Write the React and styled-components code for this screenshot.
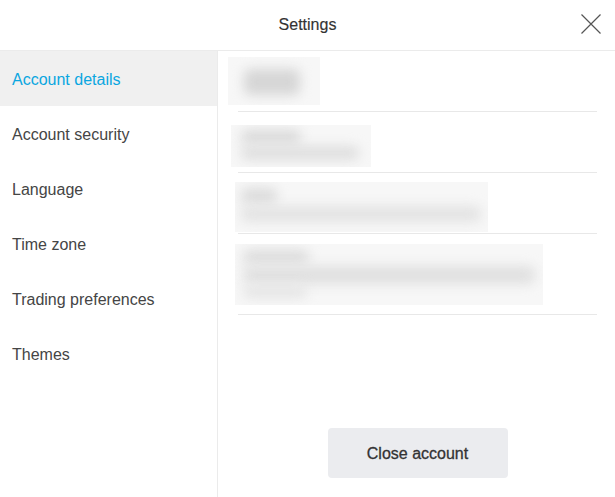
import React from "react";
import styled, { createGlobalStyle } from "styled-components";

const Global = createGlobalStyle`
  *, *::before, *::after { box-sizing: border-box; }
  html, body { margin: 0; padding: 0; background: #fff; }
  body { font-family: "Liberation Sans", Arial, sans-serif; }
  #root { width: 615px; height: 497px; }
`;

const Dialog = styled.div`
  width: 615px;
  height: 497px;
  display: flex;
  flex-direction: column;
  background: #fff;
  overflow: hidden;
`;

const Header = styled.header`
  position: relative;
  height: 51px;
  flex: none;
  display: flex;
  align-items: center;
  justify-content: center;
  border-bottom: 1px solid #ebebeb;
`;

const Title = styled.h1`
  margin: 0;
  font-size: 16px;
  font-weight: 500;
  color: #333;
  -webkit-text-stroke: 0.15px #333;
`;

const CloseButton = styled.button`
  position: absolute;
  right: 13px;
  top: 13px;
  width: 22px;
  height: 22px;
  padding: 0;
  border: 0;
  background: none;
  display: flex;
  align-items: center;
  justify-content: center;
  cursor: pointer;
`;

const Body = styled.div`
  flex: 1;
  display: flex;
  min-height: 0;
`;

const Sidebar = styled.nav`
  width: 218px;
  flex: none;
  border-right: 1px solid #ebebeb;
  display: flex;
  flex-direction: column;
`;

const NavItem = styled.div`
  height: 55px;
  display: flex;
  align-items: center;
  padding: 2px 0 0 12px;
  font-size: 16px;
  color: ${(p) => (p.$active ? "#0aa6e0" : "#454545")};
  background: ${(p) => (p.$active ? "#f0f0f0" : "transparent")};
`;

const Content = styled.section`
  flex: 1;
  display: flex;
  flex-direction: column;
  padding: 0 18px 19px 0;
`;

const List = styled.div`
  flex: 1;
  display: flex;
  flex-direction: column;
`;

const Row = styled.div`
  height: ${(p) => p.$h}px;
  flex: none;
  border-bottom: 1px solid #e8e8e8;
  margin-left: 20px;
  position: relative;
`;

const Redacted = styled.div`
  position: absolute;
  left: ${(p) => p.$x}px;
  top: ${(p) => p.$y}px;
  width: ${(p) => p.$w}px;
  height: ${(p) => p.$hh}px;
  background: #f7f7f7;
  overflow: hidden;
`;

const Smudge = styled.div`
  position: absolute;
  left: ${(p) => p.$x}px;
  top: ${(p) => p.$y}px;
  width: ${(p) => p.$w}px;
  height: ${(p) => p.$h}px;
  background: ${(p) => p.$c || "#dcdcdc"};
  border-radius: 6px;
  filter: blur(6px);
`;

const Footer = styled.div`
  display: flex;
  justify-content: center;
  padding-left: 20px;
`;

const DangerButton = styled.button`
  width: 180px;
  height: 50px;
  padding: 2px 0 0;
  border: 0;
  border-radius: 4px;
  background: #ebecef;
  font-family: "Liberation Sans", Arial, sans-serif;
  font-size: 16px;
  font-weight: 500;
  color: #333;
  -webkit-text-stroke: 0.3px #333;
  cursor: pointer;
`;

const navItems = [
  "Account details",
  "Account security",
  "Language",
  "Time zone",
  "Trading preferences",
  "Themes",
];

// hidden field values are shown as soft smudges
const rows = [
  {
    h: 61,
    box: { x: -10, y: 6, w: 92, h: 48 },
    smudges: [{ x: 16, y: 12, w: 56, h: 26, c: "#d6d6d6" }],
  },
  {
    h: 61,
    box: { x: -7, y: 13, w: 140, h: 42 },
    smudges: [
      { x: 10, y: 5, w: 60, h: 14, c: "#dadada" },
      { x: 10, y: 21, w: 118, h: 14, c: "#dedede" },
    ],
  },
  {
    h: 61,
    box: { x: -3, y: 9, w: 253, h: 50 },
    smudges: [
      { x: 6, y: 6, w: 36, h: 16, c: "#dcdcdc" },
      { x: 6, y: 24, w: 240, h: 16, c: "#e3e3e3" },
    ],
  },
  {
    h: 81,
    box: { x: -3, y: 10, w: 308, h: 61 },
    smudges: [
      { x: 8, y: 6, w: 66, h: 14, c: "#dcdcdc" },
      { x: 8, y: 22, w: 292, h: 18, c: "#e0e0e0" },
      { x: 8, y: 42, w: 64, h: 12, c: "#e4e4e4" },
    ],
  },
];

function CloseIcon() {
  return (
    <svg width="22" height="22" viewBox="0 0 22 22" fill="none">
      <path d="M1.5 1.5 L20.5 20.5 M20.5 1.5 L1.5 20.5" stroke="#555" strokeWidth="1.2" />
    </svg>
  );
}

export default function App() {
  return (
    <>
      <Global />
      <Dialog>
        <Header>
          <Title>Settings</Title>
          <CloseButton aria-label="Close">
            <CloseIcon />
          </CloseButton>
        </Header>
        <Body>
          <Sidebar>
            {navItems.map((label, i) => (
              <NavItem key={label} $active={i === 0}>
                {label}
              </NavItem>
            ))}
          </Sidebar>
          <Content>
            <List>
              {rows.map((r, i) => (
                <Row key={i} $h={r.h}>
                  <Redacted $x={r.box.x} $y={r.box.y} $w={r.box.w} $hh={r.box.h}>
                    {r.smudges.map((s, j) => (
                      <Smudge key={j} $x={s.x} $y={s.y} $w={s.w} $h={s.h} $c={s.c} />
                    ))}
                  </Redacted>
                </Row>
              ))}
            </List>
            <Footer>
              <DangerButton>Close account</DangerButton>
            </Footer>
          </Content>
        </Body>
      </Dialog>
    </>
  );
}
